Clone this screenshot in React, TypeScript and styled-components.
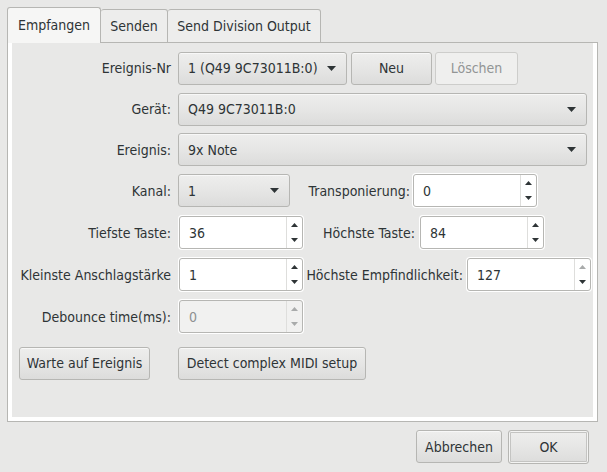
import React from "react";
import styled, { createGlobalStyle } from "styled-components";

const GlobalStyle = createGlobalStyle`
  html, body {
    margin: 0;
    padding: 0;
    background: #e8e8e7;
  }
  body {
    font-family: "DejaVu Sans Condensed", "DejaVu Sans", sans-serif;
    font-size: 14px;
    color: #2e3436;
  }
`;

const Window = styled.div`
  width: 607px;
  height: 472px;
  box-sizing: border-box;
  padding: 7px 9px 0 7px;
  display: flex;
  flex-direction: column;
  background: #e8e8e7;
`;

const TabBar = styled.div`
  display: flex;
  align-items: flex-end;
  height: 36px;
  margin-bottom: -1px;
  position: relative;
  z-index: 1;
`;

const Tab = styled.div<{ $active?: boolean; $w: number }>`
  box-sizing: border-box;
  width: ${(p) => p.$w}px;
  height: ${(p) => (p.$active ? 36 : 34)}px;
  display: flex;
  align-items: center;
  justify-content: center;
  padding-bottom: ${(p) => (p.$active ? 2 : 1)}px;
  border: 1px solid #b6b6b3;
  border-bottom: ${(p) => (p.$active ? "none" : "1px solid #b6b6b3")};
  border-left: ${(p) => (p.$active ? "1px solid #b6b6b3" : "none")};
  border-radius: 3px 3px 0 0;
  background: ${(p) => (p.$active ? "#f6f6f5" : "#ededec")};
  white-space: nowrap;
`;

const Panel = styled.div`
  box-sizing: border-box;
  height: 380px;
  border: 1px solid #b6b6b3;
  box-shadow: inset 4px 0 0 #fff, inset -4px 0 0 #fff, inset 0 -4px 0 #fff;
  padding: 8px 0 0 11px;
  display: flex;
  flex-direction: column;
  gap: 7px;
`;

const Row = styled.div<{ $h: number; $mt?: number }>`
  display: grid;
  grid-template-columns: 152px 1fr;
  column-gap: 7px;
  height: ${(p) => p.$h}px;
  margin-top: ${(p) => p.$mt || 0}px;
  align-items: center;
`;

const Label = styled.div`
  text-align: right;
  white-space: nowrap;
`;

const Line = styled.div`
  display: flex;
  align-items: center;
  height: 100%;
`;

const InlineLabel = styled.div<{ $w: number; $gap: number }>`
  width: ${(p) => p.$w}px;
  margin-right: ${(p) => p.$gap}px;
  text-align: right;
  white-space: nowrap;
`;

const raised = `
  box-sizing: border-box;
  border: 1px solid #b6b6b3;
  border-radius: 3px;
  background: linear-gradient(to bottom, #eeeeed 0%, #e6e6e5 50%, #dcdcdb 100%);
  box-shadow: inset 0 1px 0 rgba(255,255,255,0.6);
  color: #2e3436;
`;

const Combo = styled.div<{ $w: number }>`
  ${raised}
  width: ${(p) => p.$w}px;
  height: 33px;
  display: flex;
  align-items: center;
  justify-content: space-between;
  padding: 0 10px 0 9px;
  white-space: nowrap;
`;

const Button = styled.div<{ $w: number; $disabled?: boolean; $default?: boolean }>`
  ${raised}
  width: ${(p) => p.$w}px;
  height: ${(p) => (p.$default ? 34 : 33)}px;
  display: flex;
  align-items: center;
  justify-content: center;
  white-space: nowrap;
  ${(p) =>
    p.$disabled &&
    `
    background: #efefee;
    border-color: #cdcdcb;
    box-shadow: none;
    color: #929595;
  `}
  ${(p) =>
    p.$default &&
    `
    box-shadow: inset 0 0 0 1px #f4f4f3, inset 0 0 0 2px #c4c4c2;
  `}
`;

const SpinBox = styled.div<{ $w: number; $disabled?: boolean }>`
  box-sizing: border-box;
  width: ${(p) => p.$w - 2}px;
  height: 33px;
  margin: 1px;
  border: 1px solid #b6b6b3;
  border-radius: 3px;
  background: ${(p) => (p.$disabled ? "#f1f1f0" : "#ffffff")};
  box-shadow: 0 0 0 1px #ffffff;
  display: flex;
  align-items: stretch;
  color: ${(p) => (p.$disabled ? "#8d9091" : "#2e3436")};
`;

const SpinValue = styled.div`
  flex: 1;
  display: flex;
  align-items: center;
  padding-left: 9px;
`;

const SpinButtons = styled.div`
  width: 15px;
  border-left: 1px solid #dededc;
  display: flex;
  flex-direction: column;
`;

const SpinHalf = styled.div`
  flex: 1;
  display: flex;
  align-items: center;
  justify-content: center;
`;

const DialogButtons = styled.div`
  display: flex;
  justify-content: flex-end;
  gap: 6px;
  margin-top: 8px;
  padding-right: 9px;
`;

const Spacer = styled.span<{ $w: number }>`
  width: ${(p) => p.$w}px;
  flex: none;
`;

const Tri = ({ up, color = "#2e3436", w = 8, h = 4 }: { up?: boolean; color?: string; w?: number; h?: number }) => (
  <svg width={w} height={h} viewBox={`0 0 ${w} ${h}`}>
    <polygon points={up ? `0,${h} ${w},${h} ${w / 2},0` : `0,0 ${w},0 ${w / 2},${h}`} fill={color} />
  </svg>
);

const ComboBox = ({ w, text }: { w: number; text: string }) => (
  <Combo $w={w}>
    <span>{text}</span>
    <Tri w={9} h={5} />
  </Combo>
);

const Spin = ({
  w = 126,
  value,
  disabled,
  upDisabled,
}: {
  w?: number;
  value: string;
  disabled?: boolean;
  upDisabled?: boolean;
}) => (
  <SpinBox $w={w} $disabled={disabled}>
    <SpinValue>{value}</SpinValue>
    <SpinButtons>
      <SpinHalf>
        <Tri up w={7} h={4} color={disabled || upDisabled ? "#a9abab" : "#2e3436"} />
      </SpinHalf>
      <SpinHalf>
        <Tri w={7} h={4} color={disabled ? "#a9abab" : "#2e3436"} />
      </SpinHalf>
    </SpinButtons>
  </SpinBox>
);

export default function App() {
  return (
    <>
      <GlobalStyle />
      <Window>
        <TabBar>
          <Tab $active $w={94}>
            Empfangen
          </Tab>
          <Tab $w={67}>Senden</Tab>
          <Tab $w={153}>Send Division Output</Tab>
        </TabBar>
        <Panel>
          <Row $h={34}>
            <Label>Ereignis-Nr</Label>
            <Line>
              <ComboBox w={169} text="1 (Q49 9C73011B:0)" />
              <Spacer $w={4} />
              <Button $w={81}>Neu</Button>
              <Spacer $w={3} />
              <Button $w={83} $disabled>
                Löschen
              </Button>
            </Line>
          </Row>
          <Row $h={34}>
            <Label>Gerät:</Label>
            <Line>
              <ComboBox w={409} text="Q49 9C73011B:0" />
            </Line>
          </Row>
          <Row $h={33}>
            <Label>Ereignis:</Label>
            <Line>
              <ComboBox w={409} text="9x Note" />
            </Line>
          </Row>
          <Row $h={35}>
            <Label>Kanal:</Label>
            <Line>
              <ComboBox w={112} text="1" />
              <InlineLabel $w={120} $gap={2}>
                Transponierung:
              </InlineLabel>
              <Spin value="0" />
            </Line>
          </Row>
          <Row $h={35}>
            <Label>Tiefste Taste:</Label>
            <Line>
              <Spin value="36" />
              <InlineLabel $w={111} $gap={4}>
                Höchste Taste:
              </InlineLabel>
              <Spin value="84" />
            </Line>
          </Row>
          <Row $h={35}>
            <Label>Kleinste Anschlagstärke</Label>
            <Line>
              <Spin value="1" />
              <InlineLabel $w={159} $gap={3}>
                Höchste Empfindlichkeit:
              </InlineLabel>
              <Spin value="127" upDisabled />
            </Line>
          </Row>
          <Row $h={35}>
            <Label>Debounce time(ms):</Label>
            <Line>
              <Spin value="0" disabled />
            </Line>
          </Row>
          <Row $h={34} $mt={5}>
            <Button $w={131}>Warte auf Ereignis</Button>
            <Button $w={188}>Detect complex MIDI setup</Button>
          </Row>
        </Panel>
        <DialogButtons>
          <Button $w={86}>Abbrechen</Button>
          <Button $w={81} $default>
            OK
          </Button>
        </DialogButtons>
      </Window>
    </>
  );
}
